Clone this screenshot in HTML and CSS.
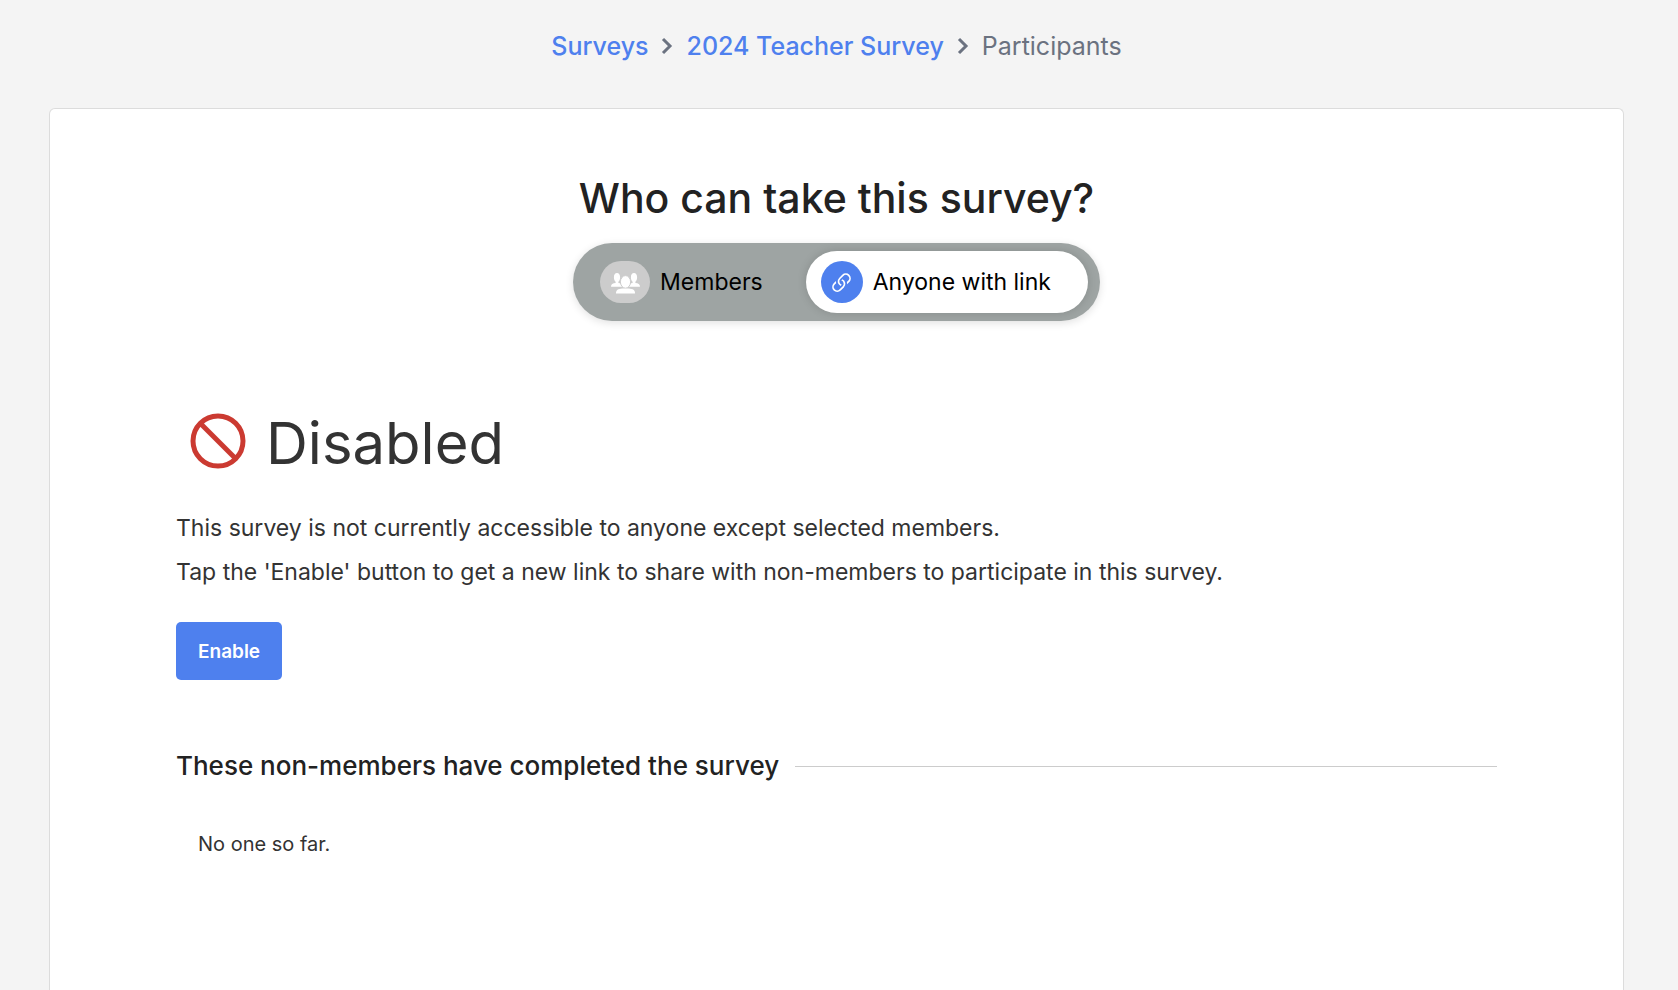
FILE: index.html
```
<!DOCTYPE html>
<html lang="en">
<head>
    <meta charset="UTF-8">
    <meta name="viewport" content="width=device-width, initial-scale=1.0">
    <title>2024 Teacher Survey - Participants</title>
    <link rel="stylesheet" href="styles.css">
</head>
<body>
    <nav class="breadcrumb">
        <a href="#">Surveys</a>
        <svg class="chevron" viewBox="0 0 12 18"><path d="M2 2l7 7-7 7"/></svg>
        <a href="#">2024 Teacher Survey</a>
        <svg class="chevron" viewBox="0 0 12 18"><path d="M2 2l7 7-7 7"/></svg>
        <span>Participants</span>
    </nav>

    <main class="card">
        <h1>Who can take this survey?</h1>
        <div class="toggle">
            <button type="button" class="option">
                <span class="icon members">
                    <svg width="29" height="21" viewBox="0 0 29 21">
                        <path d="M6 0c2 0 3.100 1.700 3.100 4.200 0 2-.7 3.700-1.700 4.600v1.300c2.200.3 3.600 1.200 3.600 3.600H0c0-2.400 1.800-3.300 4.600-3.600V8.800C3.600 7.900 2.900 6.200 2.900 4.200 2.900 1.700 4 0 6 0z"/>
                        <path d="M23 0c-2 0-3.100 1.700-3.100 4.200 0 2 .7 3.700 1.700 4.600v1.300c-2.200.3-3.600 1.200-3.600 3.600h11c0-2.400-1.800-3.300-4.600-3.600V8.800c1-.9 1.700-2.600 1.700-4.600C26.100 1.700 25 0 23 0z"/>
                        <ellipse class="front" cx="14.500" cy="8.900" rx="5.100" ry="6.300"/>
                        <path d="M5 20.500c0-3.300 1.800-4.700 6.500-5h6c4.700.3 6.500 1.700 6.500 5z"/>
                    </svg>
                </span>
                Members
            </button>
            <button type="button" class="option active">
                <span class="icon link">
                    <svg width="27" height="27" viewBox="0 0 16 16">
                        <path d="M4.715 6.542 3.343 7.914a3 3 0 1 0 4.243 4.243l1.828-1.829A3 3 0 0 0 8.586 5.500L8 6.086a1.002 1.002 0 0 0-.154.199 2 2 0 0 1 .861 3.337L6.880 11.450a2 2 0 1 1-2.830-2.830l.793-.792a4.018 4.018 0 0 1-.128-1.287z"/>
                        <path d="M6.586 4.672A3 3 0 0 0 7.414 9.500l.775-.776a2 2 0 0 1-.896-3.346L9.120 3.550a2 2 0 1 1 2.830 2.830l-.793.792c.112.420.155.855.128 1.287l1.372-1.372a3 3 0 1 0-4.243-4.243L6.586 4.672z"/>
                    </svg>
                </span>
                Anyone with link
            </button>
        </div>

        <h2 class="status">
            <svg width="56" height="56" viewBox="0 0 56 56">
                <circle cx="28" cy="28" r="25"/>
                <path d="M10.500 10.500l35 35"/>
            </svg>
            Disabled
        </h2>
        <p>This survey is not currently accessible to anyone except selected members.</p>
        <p>Tap the 'Enable' button to get a new link to share with non-members to participate in this survey.</p>
        <button type="button" class="enable">Enable</button>

        <h3 class="divider">These non-members have completed the survey</h3>
        <div class="empty">No one so far.</div>
    </main>
</body>
</html>
```
FILE: styles.css
```
* {
    box-sizing: border-box;
}
body {
    margin: 0;
    min-height: 100vh;
    padding: 0 54px 0 49px;
    display: flex;
    flex-direction: column;
    background: #f4f4f4;
    color: #333;
    font-family: Inter, 'Liberation Sans', sans-serif;
}
.breadcrumb {
    display: flex;
    justify-content: center;
    align-items: center;
    gap: 13px;
    padding: 30px 0;
    margin-bottom: 16px;
    font-size: 25px;
    line-height: 32px;
    color: #6b7280;
}
.breadcrumb a {
    color: #4e80ee;
    font-weight: 500;
    text-decoration: none;
}
.chevron {
    width: 12px;
    height: 18px;
    fill: none;
    stroke: #6b7280;
    stroke-width: 3;
}
.card {
    flex: 1;
    padding: 64px 126px;
    background: #fff;
    border: 1px solid #dcdcdc;
    border-bottom: none;
    border-radius: 6px 6px 0 0;
}
h1 {
    margin: 0 0 20px;
    font-size: 41px;
    font-weight: 500;
    line-height: 50px;
    text-align: center;
    color: #222;
}
.toggle {
    display: flex;
    width: fit-content;
    margin: 0 auto 88px;
    padding: 8px 12px;
    background: #9ea4a3;
    border-radius: 39px;
    box-shadow: 0 2px 8px rgba(0, 0, 0, 0.12);
}
.option {
    display: flex;
    align-items: center;
    gap: 10px;
    height: 62px;
    padding: 0 43px 0 15px;
    border: none;
    border-radius: 31px;
    background: none;
    color: #000;
    font-family: inherit;
    font-size: 23px;
    cursor: pointer;
}
.option.active {
    padding-right: 37px;
    background: #fff;
    box-shadow: 0 0 10px rgba(0, 0, 0, 0.15);
}
.icon {
    display: flex;
    align-items: center;
    justify-content: center;
    height: 42px;
    padding-top: 2px;
    border-radius: 21px;
}
.members {
    width: 50px;
    background: #ccc;
    fill: #fff;
}
.members .front {
    stroke: #ccc;
    stroke-width: 1;
}
.link {
    width: 42px;
    background: #4e80ee;
    fill: #fff;
}
.status {
    display: flex;
    align-items: center;
    gap: 20px;
    margin: 0 0 29px;
    padding-left: 14px;
    font-size: 58px;
    font-weight: 400;
    line-height: 68px;
}
.status svg {
    margin-bottom: 4px;
    fill: none;
    stroke: #cb3a31;
    stroke-width: 5;
}
p {
    margin: 0;
    font-size: 23px;
    line-height: 44px;
}
.enable {
    display: block;
    height: 58px;
    margin: 28px 0 64px;
    padding: 0 22px;
    border: none;
    border-radius: 5px;
    background: #4e80ee;
    color: #fff;
    font-family: inherit;
    font-size: 19px;
    font-weight: 600;
    cursor: pointer;
}
.divider {
    display: flex;
    align-items: center;
    gap: 16px;
    margin: 0;
    font-size: 26px;
    font-weight: 500;
    line-height: 44px;
    color: #222;
}
.divider::after {
    content: "";
    flex: 1;
    height: 1px;
    background: #ccc;
}
.empty {
    padding: 40px 22px;
    font-size: 20px;
    line-height: 32px;
}
```
